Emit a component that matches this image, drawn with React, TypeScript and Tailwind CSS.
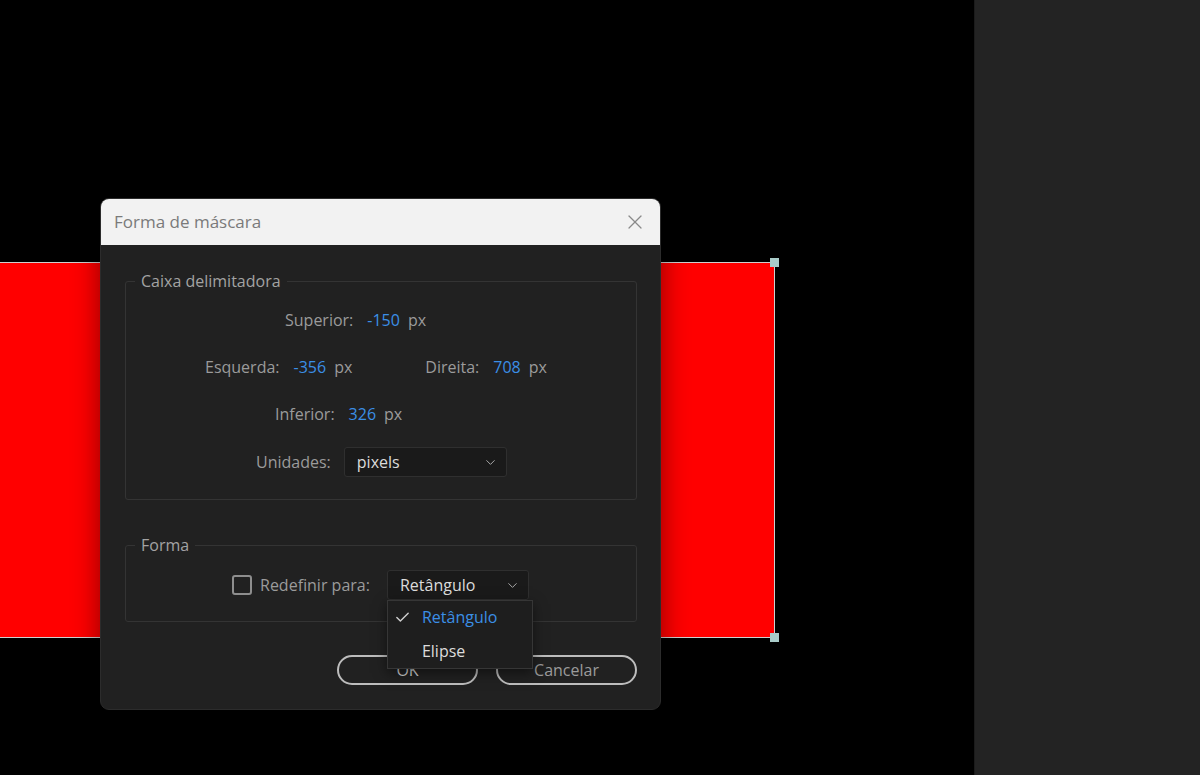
import { Check, ChevronDown, X } from 'lucide-react';

const font = { fontFamily: '"Open Sans", "Noto Sans", sans-serif' };

function Value({ label, value, labelMl = '', className = '' }: { label: string; value: string; labelMl?: string; className?: string }) {
  return (
    <div className={`flex items-center text-[16px] ${className}`}>
      <span className={`text-[#9b9b9b] ${labelMl}`}>{label}</span>
      <span className="ml-[14px] text-[#3b8fe6]">{value}</span>
      <span className="ml-[8px] text-[#9b9b9b]">px</span>
    </div>
  );
}

function Select({ value, width }: { value: string; width: string }) {
  return (
    <div
      className={`flex h-[30px] ${width} items-center justify-between rounded-[3px] border border-[#2f2f2f] bg-[#1a1a1a] pl-3 pr-2 text-[16px] text-[#dcdcdc]`}
    >
      <span>{value}</span>
      <ChevronDown size={15} strokeWidth={1.6} className="text-[#a8a8a8]" />
    </div>
  );
}

export default function App() {
  return (
    <div className="flex h-[775px] w-[1200px] overflow-hidden bg-black" style={font}>
      {/* Composition canvas */}
      <div className="relative flex-1 bg-black">
        {/* Red layer with mask bounds */}
        <div className="absolute left-0 top-[262px] h-[376px] w-[775px] border-y border-r border-[#cfcfcf] bg-[#ff0000]" />
        <div className="absolute left-[770px] top-[258px] h-[9px] w-[9px] bg-[#a9ccc9]" />
        <div className="absolute left-[770px] top-[633px] h-[9px] w-[9px] bg-[#a9ccc9]" />

        {/* Dialog */}
        <div className="absolute left-[100px] top-[198px] flex w-[561px] flex-col overflow-hidden rounded-[9px] border border-[#2c2c2c] bg-[#212121] shadow-[0_0_28px_rgba(0,0,0,0.45)]">
          <div className="flex h-[46px] items-center justify-between bg-[#f2f2f2] pl-[13px] pr-[13px]">
            <span className="text-[17px] text-[#7a7a7a]">Forma de máscara</span>
            <X size={24} strokeWidth={1.2} className="text-[#8a8a8a]" />
          </div>

          <div className="flex flex-col pb-[24px] pl-[24px] pr-[23px]">
            {/* Caixa delimitadora */}
            <fieldset className="mt-[25px] h-[230px] rounded-[3px] border border-[#343434]">
              <legend className="ml-[9px] px-[6px] text-[16px] leading-[22px] text-[#a3a3a3]">Caixa delimitadora</legend>
              <div className="flex flex-col gap-[23px] pt-[16px]">
                <Value label="Superior:" value="-150" labelMl="ml-[159px]" className="h-[24px]" />
                <div className="flex h-[24px] items-center">
                  <Value label="Esquerda:" value="-356" labelMl="ml-[79px]" />
                  <Value label="Direita:" value="708" labelMl="ml-[73px]" />
                </div>
                <Value label="Inferior:" value="326" labelMl="ml-[149px]" className="h-[24px]" />
                <div className="-mt-[2px] flex items-center">
                  <span className="ml-[130px] text-[16px] text-[#9b9b9b]">Unidades:</span>
                  <div className="ml-[13px]">
                    <Select value="pixels" width="w-[163px]" />
                  </div>
                </div>
              </div>
            </fieldset>

            {/* Forma */}
            <fieldset className="mt-[34px] h-[88px] rounded-[3px] border border-[#343434]">
              <legend className="ml-[9px] px-[6px] text-[16px] leading-[22px] text-[#a3a3a3]">Forma</legend>
              <div className="flex items-center pt-[14px]">
                <div className="ml-[106px] h-[20px] w-[20px] rounded-[3px] border-2 border-[#8e8e8e]" />
                <span className="ml-[8px] text-[16px] text-[#9b9b9b]">Redefinir para:</span>
                <div className="relative ml-[17px]">
                  <Select value="Retângulo" width="w-[142px]" />
                  {/* Open menu */}
                  <div className="absolute left-0 top-[30px] z-10 flex w-[146px] flex-col border border-[#363636] bg-[#1e1e1e] pb-[2px] shadow-[0_4px_12px_rgba(0,0,0,0.5)]">
                    <div className="flex h-[32px] items-center">
                      <Check size={17} strokeWidth={2} className="ml-[6px] text-[#cfcfcf]" />
                      <span className="ml-[11px] text-[16px] text-[#3b8fe6]">Retângulo</span>
                    </div>
                    <div className="mt-[3px] flex h-[30px] items-center">
                      <span className="ml-[34px] text-[16px] text-[#dcdcdc]">Elipse</span>
                    </div>
                  </div>
                </div>
              </div>
            </fieldset>

            {/* Buttons */}
            <div className="mt-[33px] flex justify-end gap-[18px]">
              <button className="flex h-[30px] w-[141px] items-center justify-center rounded-full border-2 border-[#bdbdbd] text-[16px] text-[#d6d6d6]">
                OK
              </button>
              <button className="flex h-[30px] w-[141px] items-center justify-center rounded-full border-2 border-[#bdbdbd] text-[16px] text-[#9b9b9b]">
                Cancelar
              </button>
            </div>
          </div>
        </div>
      </div>

      {/* Right panel */}
      <div className="w-[226px] border-l border-[#1b1b1b] bg-[#232323]" />
    </div>
  );
}
